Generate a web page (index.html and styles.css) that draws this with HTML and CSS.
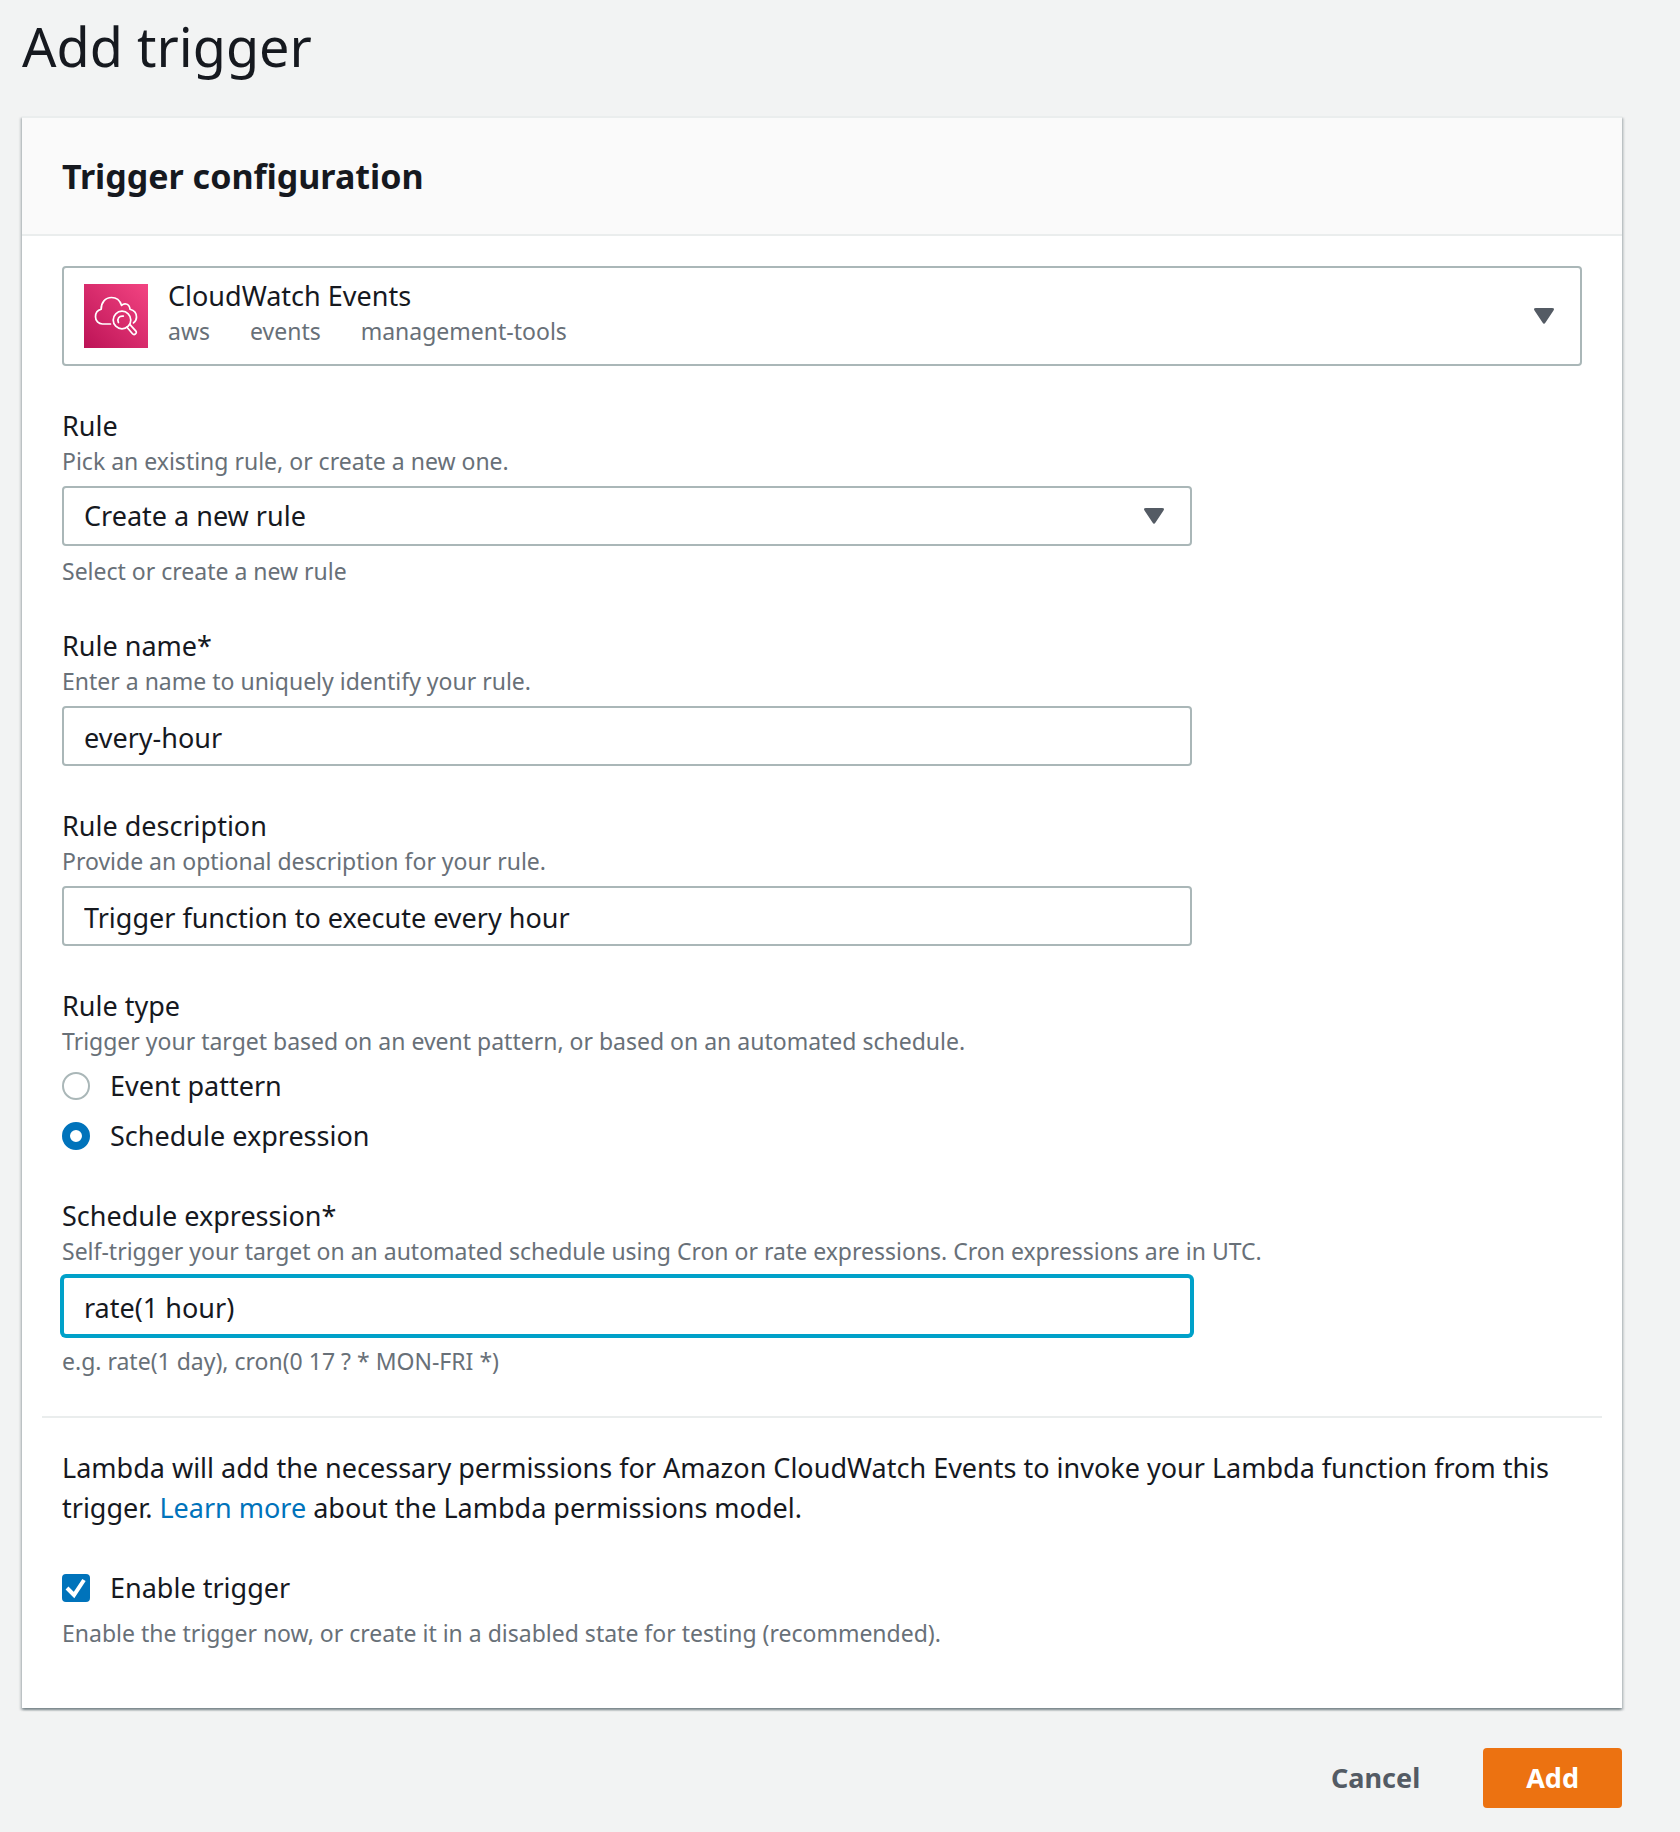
FILE: index.html
```html
<!DOCTYPE html>
<html lang="en">
<head>
  <meta charset="utf-8">
  <meta name="viewport" content="width=device-width, initial-scale=1">
  <title>Add trigger</title>
  <link rel="stylesheet" href="styles.css">
</head>
<body>
  <main class="page">
    <h1 class="page-title">Add trigger</h1>
    <form class="trigger-form">
      <section class="card">
        <header class="card-header">
          <h2 class="card-title">Trigger configuration</h2>
        </header>
        <div class="card-body">
          <button class="service-select" type="button" aria-haspopup="listbox" aria-label="Trigger source">
            <svg class="service-icon" viewBox="0 0 64 64" aria-hidden="true">
              <defs>
                <linearGradient id="service-fill" x1="0" y1="1" x2="1" y2="0">
                  <stop offset="0" stop-color="#bc1356"/>
                  <stop offset="1" stop-color="#f34482"/>
                </linearGradient>
              </defs>
              <path fill="url(#service-fill)" d="M0 0h64v64H0z"/>
              <g fill="none" stroke="#fff" stroke-width="1.7" stroke-linecap="round" stroke-linejoin="round">
                <path d="M26.500 40H18.500C14.500 40 11.500 37 11.500 32.700C11.500 29 13.700 26.200 17.200 25.300C17 18.500 21.300 13.500 27.500 13.500C32.500 13.500 36 16.500 37.600 21.400C39 20 40.700 19.500 42.300 20C44.500 20.600 45.700 22.500 46 25.200C50 26.200 52.500 29 52.500 33C52.500 35.500 51.400 37.500 49.500 38.900"/>
                <circle cx="38" cy="36" r="8.800"/>
                <path d="M34.400 38.500C32.800 34.500 35 31.700 39.300 32.200"/>
                <path d="M43 43.200L48.500 49.700C49.300 50.600 50.500 50.700 51.500 49.900C52.500 49.100 52.600 47.900 51.700 46.900L45.800 40.400"/>
              </g>
            </svg>
            <span class="service-text">
              <span class="service-name">CloudWatch Events</span>
              <span class="service-tags"><span>aws</span><span>events</span><span>management-tools</span></span>
            </span>
            <svg class="caret" viewBox="0 0 20 16" aria-hidden="true"><path d="M2 0H18Q21 0 19.500 2.500L11.500 14.500Q10 17 8.500 14.500L.5 2.500Q-1 0 2 0z"/></svg>
          </button>

          <div class="field">
            <label class="label" for="rule">Rule</label>
            <p class="hint">Pick an existing rule, or create a new one.</p>
            <div class="select-box">
              <select class="control" id="rule"><option>Create a new rule</option></select>
              <svg class="caret select-caret" viewBox="0 0 20 16" aria-hidden="true"><path d="M2 0H18Q21 0 19.500 2.500L11.500 14.500Q10 17 8.500 14.500L.5 2.500Q-1 0 2 0z"/></svg>
            </div>
            <p class="note">Select or create a new rule</p>
          </div>

          <div class="field">
            <label class="label" for="rule-name">Rule name*</label>
            <p class="hint">Enter a name to uniquely identify your rule.</p>
            <input class="control" id="rule-name" type="text" value="every-hour">
          </div>

          <div class="field">
            <label class="label" for="rule-description">Rule description</label>
            <p class="hint">Provide an optional description for your rule.</p>
            <input class="control" id="rule-description" type="text" value="Trigger function to execute every hour">
          </div>

          <fieldset class="field">
            <legend class="label">Rule type</legend>
            <p class="hint">Trigger your target based on an event pattern, or based on an automated schedule.</p>
            <div class="choices">
              <label class="choice"><input class="radio" type="radio" name="type">Event pattern</label>
              <label class="choice"><input class="radio" type="radio" name="type" checked>Schedule expression</label>
            </div>
          </fieldset>

          <div class="field">
            <label class="label" for="schedule">Schedule expression*</label>
            <p class="hint">Self-trigger your target on an automated schedule using Cron or rate expressions. Cron expressions are in UTC.</p>
            <input class="control control-active" id="schedule" type="text" value="rate(1 hour)">
            <p class="note">e.g. rate(1 day), cron(0 17 ? * MON-FRI *)</p>
          </div>

          <hr class="divider">

          <p class="permissions">Lambda will add the necessary permissions for Amazon CloudWatch Events to invoke your Lambda function from this trigger. <a class="link" href="#">Learn more</a> about the Lambda permissions model.</p>

          <label class="choice"><input class="checkbox" type="checkbox" checked>Enable trigger</label>
          <p class="hint enable-hint">Enable the trigger now, or create it in a disabled state for testing (recommended).</p>
        </div>
      </section>
      <div class="actions">
        <button class="button" type="button">Cancel</button>
        <button class="button button-primary" type="submit">Add</button>
      </div>
    </form>
  </main>
</body>
</html>
```
FILE: styles.css
```css
* {
  box-sizing: border-box;
}

body {
  margin: 0;
  background: #f2f3f3;
  color: #16191f;
  font: 450 27px/40px "Noto Sans", "Open Sans", sans-serif;
}

h1, h2, p, fieldset, legend {
  margin: 0;
  padding: 0;
}

fieldset {
  border: 0;
}

input, select, button {
  margin: 0;
  color: inherit;
  font: inherit;
}

.page {
  padding: 12px 58px 24px 22px;
}

.page-title {
  margin-bottom: 36px;
  font-size: 54px;
  font-weight: 400;
  line-height: 68px;
}

.card {
  border-top: 2px solid #eaeded;
  background: #fff;
  box-shadow: 0 2px 2px rgba(0, 28, 36, 0.3), 2px 2px 2px rgba(0, 28, 36, 0.15), -2px 2px 2px rgba(0, 28, 36, 0.15);
}

.card-header {
  padding: 38px 40px;
  border-bottom: 2px solid #eaeded;
  background: #fafafa;
}

.card-title {
  font-size: 34px;
  font-weight: 700;
  line-height: 40px;
}

.card-body {
  padding: 30px 40px 58px;
}

.service-select {
  display: flex;
  align-items: center;
  gap: 20px;
  width: 100%;
  height: 100px;
  margin-bottom: 40px;
  padding: 0 26px 0 20px;
  border: 2px solid #aab7b8;
  border-radius: 4px;
  background: #fff;
  text-align: left;
}

.service-icon {
  flex: none;
  width: 64px;
  height: 64px;
}

.service-text {
  display: flex;
  flex: 1;
  flex-direction: column;
  padding-bottom: 8px;
}

.service-name {
  line-height: 38px;
}

.service-tags {
  display: flex;
  gap: 40px;
  color: #687078;
  font-size: 23px;
  line-height: 32px;
}

.caret {
  flex: none;
  width: 20px;
  height: 16px;
  fill: #545b64;
}

.field {
  margin-bottom: 40px;
}

.label {
  display: block;
}

.hint, .note {
  color: #687078;
  font-size: 23px;
  line-height: 30px;
}

.hint {
  margin-bottom: 10px;
}

.note {
  padding-top: 10px;
}

.control {
  display: block;
  width: calc(75% - 10px);
  height: 60px;
  padding: 2px 20px 0;
  border: 2px solid #aab7b8;
  border-radius: 4px;
  outline: 0;
  background: #fff;
}

.control-active {
  border-color: #00a1c9;
  box-shadow: 0 0 0 2px #00a1c9;
}

.select-box {
  position: relative;
  width: calc(75% - 10px);
}

.select-box .control {
  width: 100%;
  padding-top: 0;
  appearance: none;
}

.select-caret {
  position: absolute;
  top: 22px;
  right: 28px;
  pointer-events: none;
}

.choices {
  display: flex;
  flex-direction: column;
  gap: 10px;
}

.choice {
  display: flex;
  align-items: center;
  gap: 20px;
}

.radio, .checkbox {
  flex: none;
  width: 28px;
  height: 28px;
  appearance: none;
  background: #fff;
}

.radio {
  border: 2px solid #aab7b8;
  border-radius: 50%;
}

.radio:checked {
  border: 8px solid #0073bb;
}

.checkbox {
  border: 2px solid #0073bb;
  border-radius: 4px;
}

.checkbox:checked {
  background: #0073bb url("data:image/svg+xml,%3Csvg xmlns='http://www.w3.org/2000/svg' viewBox='0 0 24 24'%3E%3Cpath fill='none' stroke='%23fff' stroke-width='4' d='M3 12l7 7L20 4'/%3E%3C/svg%3E") center / 24px 24px;
}

.divider {
  height: 2px;
  margin: 0 -20px 30px;
  border: 0;
  background: #eaeded;
}

.permissions {
  margin-bottom: 40px;
}

.link {
  color: #0073bb;
  text-decoration: none;
}

.enable-hint {
  margin: 10px 0 2px;
}

.actions {
  display: flex;
  justify-content: flex-end;
  gap: 20px;
  margin-top: 40px;
}

.button {
  height: 60px;
  padding: 0 43px;
  border: 0;
  border-radius: 4px;
  background: transparent;
  color: #545b64;
  font-weight: 700;
}

.button-primary {
  background: #ec7211;
  color: #fff;
}
```
